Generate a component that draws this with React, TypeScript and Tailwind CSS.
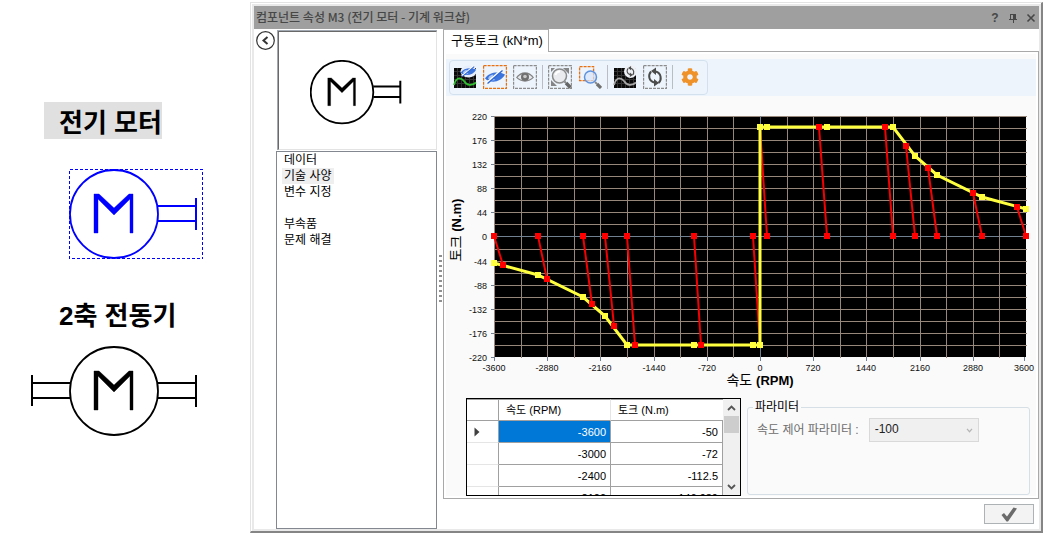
import { useState } from "react";
import type { ReactNode } from "react";
import { FaCog } from "react-icons/fa";

interface CurvePoint {
  speed: number;
  torque: number;
}

const curve: CurvePoint[] = [
  { speed: -3600, torque: -50 },
  { speed: -3000, torque: -72 },
  { speed: -2400, torque: -112.5 },
  { speed: -2100, torque: -146.939 },
  { speed: -1800, torque: -200 },
  { speed: -900, torque: -200 },
  { speed: -100, torque: -200 },
  { speed: 0, torque: -200 },
  { speed: 0, torque: 200 },
  { speed: 100, torque: 200 },
  { speed: 900, torque: 200 },
  { speed: 1800, torque: 200 },
  { speed: 2100, torque: 146.939 },
  { speed: 2400, torque: 112.5 },
  { speed: 3000, torque: 72 },
  { speed: 3600, torque: 50 },
];

// no-load speed, loaded speed, torque reached
const slopes = [
  [100, 0, 200],
  [900, 800, 200],
  [1800, 1690, 200],
  [2100, 1980, 165.3],
  [2400, 2280, 124.6],
  [3000, 2880, 78.1],
  [3600, 3480, 53.5],
];
const allSlopes = [...slopes, ...slopes.map((s) => s.map((v) => -v))];

const menu = ["데이터", "기술 사양", "변수 지정", "", "부속품", "문제 해결"];

/* ---------- Chart ---------- */

const LEFT = 48;
const TOP = 20;
const PLOT_W = 532;
const PLOT_H = 241;

const px = (speed: number) => Math.round(LEFT + PLOT_W / 2 + (speed * PLOT_W) / 7200);
const py = (torque: number) => Math.round(TOP + 120 - (torque * 120) / 220);
const gridX = (i: number) => LEFT + Math.round((i * PLOT_W) / 20);
const gridY = (i: number) => TOP + Math.ceil((i * PLOT_H) / 20 - 0.5);

function Marker({ x, y, color }: { x: number; y: number; color: string }) {
  return <rect x={x - 3} y={y - 3} width="6" height="6" fill={color} />;
}

function TorqueChart() {
  const steps = Array.from({ length: 21 }, (_, i) => i);

  return (
    <svg viewBox="0 0 590 302" className="block w-full font-['Liberation_Sans','Noto_Sans_CJK_KR',sans-serif]">
      <g shapeRendering="crispEdges">
        <rect x={LEFT} y={TOP} width={PLOT_W} height={PLOT_H} fill="#000" />
        {steps.slice(0, 20).map((i) => (
          <g key={i} fill={i === 10 ? "#708090" : "#97877a"}>
            <rect x={gridX(i)} y={TOP} width="1" height={PLOT_H + 1} />
            <rect x={LEFT} y={gridY(i)} width={PLOT_W + 1} height="1" />
          </g>
        ))}
        {steps
          .filter((i) => i % 2 === 0)
          .map((i) => (
            <g key={i} fill="#708090">
              <rect x={gridX(i) - (i === 20 ? 2 : 0)} y={TOP + PLOT_H} width="1" height="4" />
              <rect x={LEFT - 3} y={gridY(i)} width="3" height="1" />
            </g>
          ))}
      </g>

      {allSlopes.map(([from, to, torque]) => (
        <line key={from} x1={px(from)} y1={py(0)} x2={px(to)} y2={py(torque)} stroke="#f40000" strokeWidth="2" />
      ))}
      <polyline
        points={curve.map((p) => `${px(p.speed)},${py(p.torque)}`).join(" ")}
        fill="none"
        stroke="#ffff40"
        strokeWidth="3"
      />
      <g shapeRendering="crispEdges">
        {curve.map((p, i) => (
          <Marker key={i} x={px(p.speed)} y={py(p.torque)} color="#ffff40" />
        ))}
        {allSlopes.map(([from, to, torque]) => (
          <g key={from}>
            <Marker x={px(from)} y={py(0)} color="#ff0000" />
            {to !== 0 && <Marker x={px(to)} y={py(torque)} color="#ff0000" />}
          </g>
        ))}
      </g>

      {steps
        .filter((i) => i % 2 === 0)
        .map((i) => (
          <g key={i} fontSize="9" fill="#111">
            <text x={LEFT - 7} y={gridY(i) + 4} textAnchor="end">
              {220 - i * 22}
            </text>
            <text x={gridX(i) - (i === 20 ? 2 : 0)} y={TOP + PLOT_H + 14} textAnchor="middle">
              {-3600 + i * 360}
            </text>
          </g>
        ))}

      <text x={LEFT + PLOT_W / 2} y="289" fontSize="14" textAnchor="middle">
        속도{" "}
        <tspan fontSize="13" fontWeight="bold">
          (RPM)
        </tspan>
      </text>
      <text transform="rotate(-90)" x="-134" y="15" fontSize="14" textAnchor="middle">
        토크{" "}
        <tspan fontSize="13" fontWeight="bold">
          (N.m)
        </tspan>
      </text>
    </svg>
  );
}

/* ---------- Motor symbol ---------- */

interface MotorProps {
  className: string;
  color?: string;
  twoShafts?: boolean;
  selected?: boolean;
}

function Motor({ className, color = "#000", twoShafts, selected }: MotorProps) {
  return (
    <svg viewBox={twoShafts ? "-39 0 174 91" : "0 0 135 91"} className={className} fill="none" stroke={color} strokeWidth="2">
      {selected && (
        <rect x="0.5" y="0.5" width="133" height="89" strokeWidth="1" strokeDasharray="3 2" shapeRendering="crispEdges" />
      )}
      <circle cx="45" cy="45" r="44" strokeWidth="1.8" vectorEffect="non-scaling-stroke" />
      <path d="M25 64V25H30L45 39L60 25H64V64H61V30L45 46L29 30V64Z" fill={color} strokeWidth="0.4" />
      <path d="M89 37H127M89 52H127M127 29V61" vectorEffect="non-scaling-stroke" />
      {twoShafts && <path d="M1 37H-37M1 52H-37M-37 29V60" />}
    </svg>
  );
}

/* ---------- Toolbar icons ---------- */

function DashedFrame({ color = "#8c8c8c" }: { color?: string }) {
  return <rect x="0.6" y="0.6" width="22.8" height="22.8" fill="none" stroke={color} strokeWidth="1.2" strokeDasharray="3 1" />;
}

function CurveTile({ color }: { color: string }) {
  return (
    <>
      <rect x="1" y="3" width="22" height="20" fill="#0a0a0a" />
      <path
        d="M4.500 3V23M8.500 3V23M12.500 3V23M16.500 3V23M20.500 3V23M1 6.500H23M1 10.500H23M1 14.500H23M1 18.500H23"
        stroke="#333"
        strokeWidth="1"
      />
      <path d="M1 20C3 12.500 7 11.500 11 16C14 21 19 21 23 17.500" fill="none" stroke={color} strokeWidth="1.800" />
    </>
  );
}

function HiddenEye() {
  return (
    <>
      <path d="M2 13.500C6 7 16 6 22 9.500C18 17 8 19 2 13.500Z" fill="#3b74dc" />
      <path d="M5 13.500C6 10.500 8.500 9.500 10.500 9.500C9 11.500 10 14 12.500 15C10 16 7 15.500 5 13.500Z" fill="#a9c4f3" />
      <path d="M3.500 18L18.500 5" stroke="#fff" strokeWidth="1.800" />
      <path d="M4.500 18.500L19.500 5.500" stroke="#2f66d0" strokeWidth="1.400" />
    </>
  );
}

function CycleArrows() {
  return (
    <>
      <path d="M15.500 18C19 15 18.500 8 12.500 6.500" fill="none" stroke="#4b4b4b" strokeWidth="2" />
      <path d="M13 2.500V10L8 6Z" fill="#4b4b4b" />
      <path d="M8 6.500C5 10 5.500 16 11.500 17.500" fill="none" stroke="#4b4b4b" strokeWidth="2" />
      <path d="M11 14V21.500L16 18Z" fill="#4b4b4b" />
    </>
  );
}

function ToolButton({ label, children }: { label: string; children: ReactNode }) {
  return (
    <button type="button" aria-label={label} className="flex size-6 items-center justify-center hover:bg-blue-100">
      {children}
    </button>
  );
}

function Separator() {
  return <span className="mx-[5px] h-6 w-px bg-[#b9bec4]" />;
}

function Toolbar() {
  return (
    <div className="bg-[#edf4fc] py-px pl-[3px]">
      <div className="flex h-[35px] w-fit items-start rounded-sm border border-[#d3e1ef] pt-[4px] pr-[5px] pl-[3px]">
        <div className="flex gap-1.5">
          <ToolButton label="곡선 숨기기">
            <svg viewBox="0 0 24 24" className="size-6">
              <CurveTile color="#2fc12f" />
              <ellipse cx="15.500" cy="6.500" rx="8" ry="6" fill="#e6eefb" />
              <g transform="translate(6 -2.500) scale(0.780 0.750)">
                <HiddenEye />
              </g>
            </svg>
          </ToolButton>
          <ToolButton label="영역 숨기기">
            <svg viewBox="0 0 24 24" className="size-6">
              <DashedFrame color="#e8700f" />
              <HiddenEye />
            </svg>
          </ToolButton>
          <ToolButton label="영역 표시">
            <svg viewBox="0 0 24 24" className="size-6">
              <DashedFrame />
              <path d="M3 12.500C8 5.500 16 5.500 21 12.500C16 18 8 18 3 12.500Z" fill="#808080" />
              <path d="M4.500 12.500C9 7.500 15 7.500 19.500 12.500C15 16.500 9 16.500 4.500 12.500Z" fill="#e4e7eb" />
              <circle cx="12" cy="12" r="4" fill="#6f6f6f" />
              <circle cx="12" cy="11.500" r="1.800" fill="#c8c8c8" />
            </svg>
          </ToolButton>
        </div>
        <Separator />
        <div className="flex gap-1.5">
          <ToolButton label="전체 보기">
            <svg viewBox="0 0 24 24" className="size-6">
              <DashedFrame />
              <path d="M21 3V9L15 3ZM3 21V15L9 21ZM3 3H7L3 7Z" fill="#858585" />
              <circle cx="11.500" cy="11" r="7" fill="#e9ebee" stroke="#8a8a8a" strokeWidth="1.500" />
              <path d="M7.500 10C8 8 10 6.500 12 6.500" fill="none" stroke="#fff" strokeWidth="2" />
              <path d="M16.500 16.500L18 18" stroke="#8a8a8a" strokeWidth="2" />
              <path d="M18 18L22.500 22.500" stroke="#666" strokeWidth="3.500" />
            </svg>
          </ToolButton>
          <ToolButton label="영역 확대">
            <svg viewBox="0 0 24 24" className="size-6">
              <rect x="1.600" y="1.600" width="14" height="14" fill="none" stroke="#e8700f" strokeWidth="1.300" strokeDasharray="3 1" />
              <circle cx="12.500" cy="12" r="6" fill="#d7e6fb" fillOpacity="0.700" stroke="#5f92dc" strokeWidth="1.500" />
              <path d="M17 17L19 19" stroke="#8a8a8a" strokeWidth="2" />
              <path d="M19 19L23 23" stroke="#707070" strokeWidth="3.200" />
            </svg>
          </ToolButton>
        </div>
        <Separator />
        <div className="flex gap-1.5">
          <ToolButton label="곡선 초기화">
            <svg viewBox="0 0 24 24" className="size-6">
              <CurveTile color="#a8a8a8" />
              <circle cx="17.500" cy="6.500" r="6.500" fill="#eef1f5" />
              <g transform="translate(10.500 -0.500) scale(0.580)">
                <CycleArrows />
              </g>
            </svg>
          </ToolButton>
          <ToolButton label="영역 초기화">
            <svg viewBox="0 0 24 24" className="size-6">
              <DashedFrame />
              <CycleArrows />
            </svg>
          </ToolButton>
        </div>
        <Separator />
        <ToolButton label="설정">
          <FaCog size={18} className="text-[#f0922a]" />
        </ToolButton>
      </div>
    </div>
  );
}

/* ---------- Data table ---------- */

const VISIBLE_ROWS = 4;

function DataTable() {
  const [selected, setSelected] = useState(0);
  const [first, setFirst] = useState(0);

  const scroll = (delta: number) => setFirst(Math.max(0, Math.min(curve.length - VISIBLE_ROWS, first + delta)));

  return (
    <div className="flex h-[98px] w-[275px] shrink-0 overflow-hidden border border-black bg-white">
      <div className="flex-1">
        <table className="w-full table-fixed border-separate border-spacing-0 text-[11px]">
          <thead>
            <tr className="h-[22px]">
              <th className="w-8 border-t border-r border-b border-[#a0a0a0]" />
              <th className="border-t border-r border-b border-[#a0a0a0] border-r-[#e5e5e5] pl-[7px] text-left font-normal">
                속도 (RPM)
              </th>
              <th className="border-t border-b border-[#a0a0a0] pl-[7px] text-left font-normal">토크 (N.m)</th>
            </tr>
          </thead>
          <tbody>
            {curve.slice(first, first + VISIBLE_ROWS).map((row, i) => (
              <tr key={i} className="h-[22px]" onClick={() => setSelected(first + i)}>
                <th className="border-r border-b border-[#a0a0a0] border-b-[#e5e5e5]">
                  {selected === first + i && (
                    <svg viewBox="0 0 6 10" className="ml-[7px] h-[10px] w-[6px]">
                      <path d="M0.500 0.500V9.500L5.500 5Z" fill="#404040" />
                    </svg>
                  )}
                </th>
                <td
                  className={`border-r border-b border-[#a0a0a0] pt-0.5 pr-1 text-right ${selected === first + i ? "bg-[#0078d7] text-white" : ""}`}
                >
                  {row.speed}
                </td>
                <td className="border-r border-b border-[#a0a0a0] pt-0.5 pr-1 text-right">{row.torque}</td>
              </tr>
            ))}
          </tbody>
        </table>
      </div>
      <div className="flex w-[17px] flex-col bg-[#f0f0f0]">
        <button type="button" aria-label="위로" onClick={() => scroll(-1)} className="flex h-[17px] items-center justify-center">
          <svg viewBox="0 0 9 6" className="h-[6px] w-[9px]" fill="none" stroke="#555" strokeWidth="1.800">
            <path d="M1 5L4.500 1.500L8 5" />
          </svg>
        </button>
        <span className="mx-px h-[17px] bg-[#cdcdcd]" />
        <button
          type="button"
          aria-label="아래로"
          onClick={() => scroll(1)}
          className="mt-auto flex h-[17px] items-center justify-center"
        >
          <svg viewBox="0 0 9 6" className="h-[6px] w-[9px]" fill="none" stroke="#555" strokeWidth="1.800">
            <path d="M1 1L4.500 4.500L8 1" />
          </svg>
        </button>
      </div>
    </div>
  );
}

function Parameters() {
  return (
    <fieldset className="mb-px flex-1 rounded-[3px] border border-[#d5dfe5] pr-2 pl-[9px]">
      <legend className="-ml-1 px-0.5 text-xs leading-[18px]">파라미터</legend>
      <div className="mt-[2px] flex items-center gap-2.5">
        <label htmlFor="speed-control" className="text-xs whitespace-nowrap text-[#6d6d6d]">
          속도 제어 파라미터 :
        </label>
        <div className="relative">
          <select
            id="speed-control"
            className="block h-6 w-[110px] appearance-none border border-[#d9d9d9] bg-[#f0f0f0] px-[5px] pb-0.5 text-xs text-[#222]"
          >
            <option>-100</option>
            <option>100</option>
          </select>
          <svg
            viewBox="0 0 8 6"
            className="pointer-events-none absolute top-[10px] right-[6px] h-[5px] w-[7px]"
            fill="none"
            stroke="#b5b5b5"
            strokeWidth="1.500"
          >
            <path d="M1 1L4 4.500L7 1" />
          </svg>
        </div>
      </div>
    </fieldset>
  );
}

/* ---------- Dialog ---------- */

function TitleBar() {
  return (
    <header className="flex h-[23px] items-center justify-between bg-[#9e9f9e] pr-[3px] pl-[2px] text-[#474747]">
      <h1 className="pb-0.5 font-['Noto_Sans_CJK_KR',sans-serif] text-xs font-medium">
        컴포넌트 속성 M3 (전기 모터 - 기계 워크샵)
      </h1>
      <div className="flex gap-[8px]">
        <button type="button" aria-label="도움말" className="w-[10px] text-[12px] leading-[12px] font-bold">
          ?
        </button>
        <button type="button" aria-label="고정">
          <svg viewBox="0 0 10 10" className="size-[10px]" fill="currentColor" shapeRendering="crispEdges">
            <path d="M2 1H8V6H9V7H6V10H5V7H1V6H2ZM3 2V6H5V2Z" fillRule="evenodd" />
          </svg>
        </button>
        <button type="button" aria-label="닫기">
          <svg viewBox="0 0 10 10" className="size-[10px]" stroke="currentColor" strokeWidth="1.600">
            <path d="M1.500 1.500L8.500 8.500M8.500 1.500L1.500 8.500" />
          </svg>
        </button>
      </div>
    </header>
  );
}

function Sidebar() {
  const [active, setActive] = useState("기술 사양");

  return (
    <div className="flex w-[161px] shrink-0 flex-col gap-px pt-px">
      <div className="ml-px h-[120px] border-t border-l border-[#a3a9b3]">
        <div className="flex h-full items-center justify-center border border-t-[#696969] border-r-[#e3e3e3] border-b-[#e3e3e3] border-l-[#696969] pt-1">
          <Motor className="h-[65px] w-[96px]" />
        </div>
      </div>
      <nav className="flex flex-1 flex-col items-start border border-[#828790] pb-2 pl-[5px]">
        {menu.map((item, i) =>
          item ? (
            <button
              key={i}
              type="button"
              onClick={() => setActive(item)}
              className={`h-4 px-0.5 text-xs leading-[17px] ${active === item ? "bg-[#efefef]" : ""}`}
            >
              {item}
            </button>
          ) : (
            <span key={i} className="h-4" />
          )
        )}
      </nav>
    </div>
  );
}

function PropertiesDialog() {
  return (
    <section className="mt-[2px] mr-px mb-px flex min-w-0 flex-1 flex-col border-t border-r-2 border-b-2 border-l border-t-[#e3e3e3] border-r-[#858585] border-b-[#858585] border-l-[#e3e3e3] pt-px pl-px">
      <div className="flex flex-1 flex-col border-2 border-[#e9e9e9]">
        <TitleBar />
        <div className="flex flex-1">
          <div className="w-[22px] shrink-0 pt-[2px] pl-[2px]">
            <button type="button" aria-label="접기" className="block">
              <svg viewBox="0 0 19 19" className="size-[19px]" fill="none" stroke="#333">
                <circle cx="9.500" cy="9.500" r="8.800" strokeWidth="1.200" />
                <path d="M11.500 6L7.500 9.500L11.500 13" strokeWidth="2" />
              </svg>
            </button>
          </div>
          <Sidebar />
          {/* splitter grip */}
          <div className="flex w-[6px] flex-col items-center gap-[3px] pt-[226px]">
            {Array.from({ length: 10 }, (_, i) => (
              <span key={i} className="h-[2px] w-[3px] bg-[#8f8f8f]" />
            ))}
          </div>
          <div className="flex min-w-0 flex-1 flex-col">
            <div role="tablist" className="flex h-[22px]">
              <button
                type="button"
                role="tab"
                aria-selected="true"
                className="relative z-10 -mb-px w-[106px] border border-b-0 border-[#a9a9a9] bg-white pl-[7px] text-left text-[13px]"
              >
                구동토크 (kN*m)
              </button>
            </div>
            <div className="flex flex-1 flex-col border border-[#a9a9a9] p-[2px]">
              <div className="flex-1 bg-[#fafafa] pt-[5px]">
                <Toolbar />
                <TorqueChart />
                <div className="flex gap-1.5 pr-1.5 pl-5">
                  <DataTable />
                  <Parameters />
                </div>
              </div>
            </div>
            <footer className="flex h-[30px] items-center justify-end pr-[5px]">
              <button
                type="button"
                aria-label="확인"
                className="flex h-5 w-[50px] items-center justify-center border border-[#adb2b5] bg-[#f3f3f3]"
              >
                <svg viewBox="0 0 18 16" className="h-4 w-[18px]">
                  <path d="M1.500 9L4 7L7 10.500L13.500 1.500L17 2.500L8 15.500H6.500Z" fill="#6b6b6b" />
                </svg>
              </button>
            </footer>
          </div>
        </div>
      </div>
    </section>
  );
}

export default function App() {
  return (
    <main className="flex min-h-screen bg-white font-['Liberation_Sans','Noto_Sans_CJK_KR',sans-serif] text-black">
      <div className="flex w-[250px] shrink-0 flex-col items-start pt-[102px]">
        <h2 className="ml-[44px] h-[37px] bg-[#e0e0e0] pl-[15px] text-[26px] leading-[42px] font-bold">전기 모터</h2>
        <Motor className="mt-[30px] ml-[69px] h-[91px] w-[135px]" color="#0000ff" selected />
        <h2 className="mt-9 ml-[59px] text-[26px] leading-[40px] font-bold">2축 전동기</h2>
        <Motor className="mt-[10px] ml-[30px] h-[91px] w-[174px]" twoShafts />
      </div>
      <PropertiesDialog />
    </main>
  );
}
